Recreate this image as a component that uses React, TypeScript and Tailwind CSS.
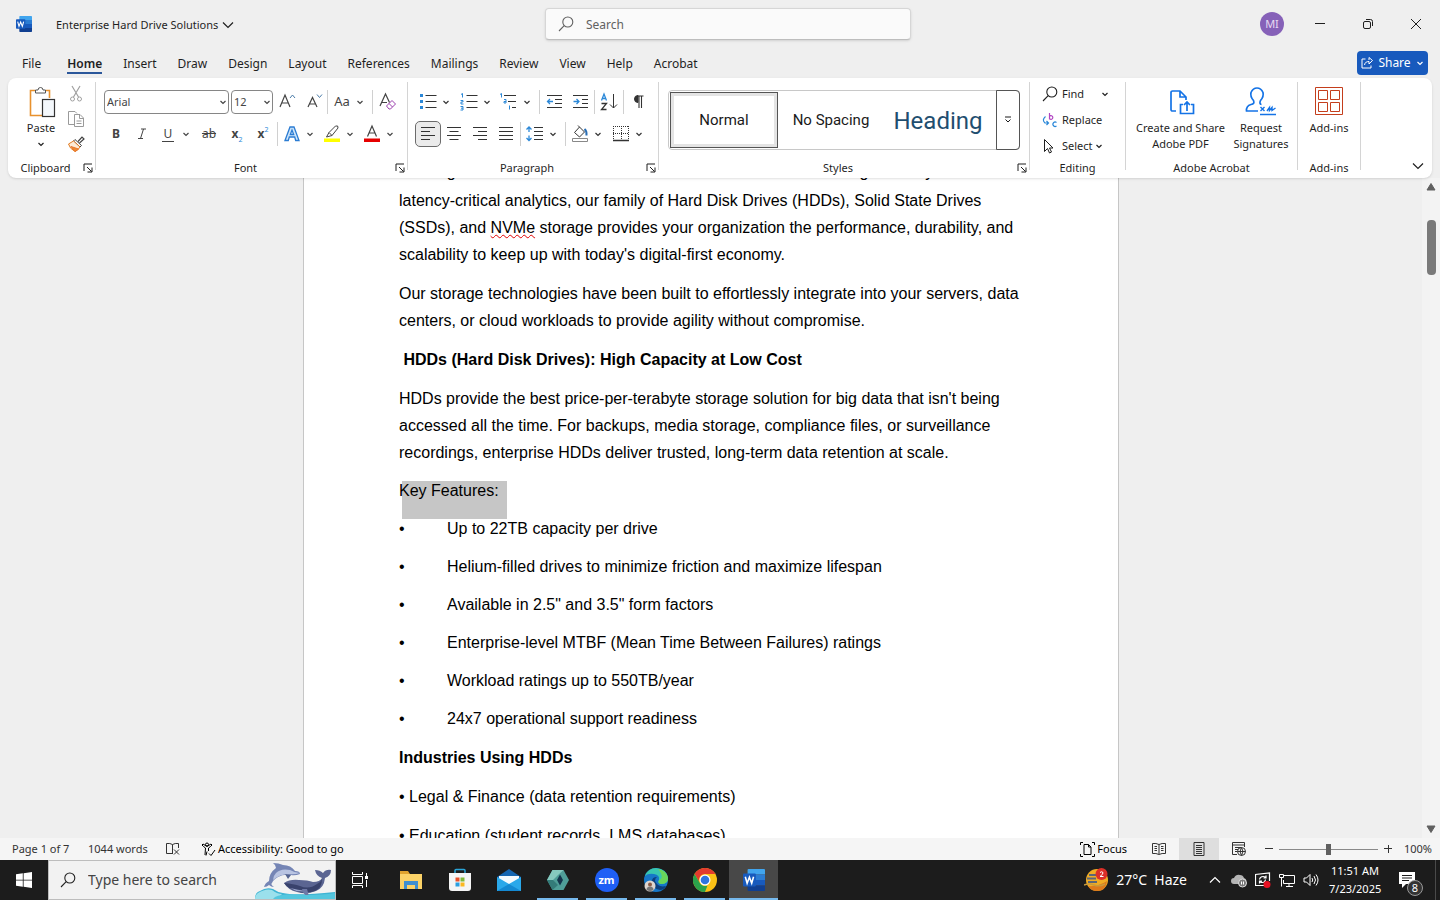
import type { ReactNode } from "react";
import { clsx } from "clsx";

const tabs = [
  "Insert",
  "Draw",
  "Design",
  "Layout",
  "References",
  "Mailings",
  "Review",
  "View",
  "Help",
  "Acrobat",
];

const features = [
  "Up to 22TB capacity per drive",
  "Helium-filled drives to minimize friction and maximize lifespan",
  "Available in 2.5\" and 3.5\" form factors",
  "Enterprise-level MTBF (Mean Time Between Failures) ratings",
  "Workload ratings up to 550TB/year",
  "24x7 operational support readiness",
];

function Svg({
  w = 20,
  h = 20,
  className,
  children,
}: {
  w?: number;
  h?: number;
  className?: string;
  children: ReactNode;
}) {
  return (
    <svg
      width={w}
      height={h}
      viewBox={`0 0 ${w} ${h}`}
      fill="none"
      stroke="currentColor"
      className={clsx("shrink-0", className)}
      aria-hidden="true"
    >
      {children}
    </svg>
  );
}

function Chevron({ className }: { className?: string }) {
  return (
    <Svg w={8} h={8} className={className}>
      <path d="M1.500 3 4 5.500 6.500 3" strokeWidth="1.200" />
    </Svg>
  );
}

function BigChevron({ up }: { up?: boolean }) {
  return (
    <Svg w={12} h={8}>
      <path d={up ? "M1 6.500 6 1.500 11 6.500" : "M1 1.500 6 6.500 11 1.500"} strokeWidth="1.200" />
    </Svg>
  );
}

function Tool({
  label,
  active,
  className,
  children,
}: {
  label: string;
  active?: boolean;
  className?: string;
  children: ReactNode;
}) {
  return (
    <button
      type="button"
      aria-label={label}
      className={clsx(
        "flex h-6 w-6 shrink-0 items-center justify-center rounded",
        active && "bg-[#ebebeb] outline outline-[#6b6b6b]",
        className,
      )}
    >
      {children}
    </button>
  );
}

function Split({
  label,
  className,
  children,
}: {
  label: string;
  className?: string;
  children: ReactNode;
}) {
  return (
    <div className={clsx("flex shrink-0 items-center gap-0.5", className)}>
      <Tool label={label}>{children}</Tool>
      <button type="button" aria-label={`${label} options`}>
        <Chevron />
      </button>
    </div>
  );
}

function Line({ className }: { className?: string }) {
  return <div className={clsx("h-6 w-px shrink-0 bg-[#d0d0d0]", className)} />;
}

function Group({
  label,
  launcher,
  className,
  children,
}: {
  label: string;
  launcher?: boolean;
  className?: string;
  children: ReactNode;
}) {
  return (
    <>
      <section
        aria-label={label}
        className={clsx("flex shrink-0 flex-col justify-between", className)}
      >
        {children}
        <div className="flex h-5 items-center">
          <span className="flex-1 text-center text-[11px]">{label}</span>
          {launcher && (
            <button type="button" aria-label={`${label} settings`} className="mr-0.5">
              <Svg w={10} h={10}>
                <path d="M1 8V1h8M4 4l4.500 4.500M9 4.500V9H4.500" />
              </Svg>
            </button>
          )}
        </div>
      </section>
      <div className="mt-1 mb-2 w-px shrink-0 bg-[#d4d4d4]" />
    </>
  );
}

function Magnifier() {
  return (
    <Svg w={16} h={16}>
      <circle cx="9.800" cy="6" r="5" strokeWidth="1.100" />
      <path d="M6.200 9.600 1 15" strokeWidth="1.100" />
    </Svg>
  );
}

function WordLogo({ size }: { size: number }) {
  return (
    <svg width={size} height={size} viewBox="0 0 24 24" aria-hidden="true">
      <path d="M6 0h17a1 1 0 0 1 1 1v5H5V1a1 1 0 0 1 1-1z" fill="#41a5ee" />
      <path d="M5 6h19v6H5z" fill="#2b7cd3" />
      <path d="M5 12h19v6H5z" fill="#185abd" />
      <path d="M5 18h19v5a1 1 0 0 1-1 1H6a1 1 0 0 1-1-1z" fill="#103f91" />
      <rect x="0" y="5" width="14" height="14" rx="1" fill="#185abd" />
      <path
        d="M2.500 8.500l2 7L7 9l2.500 6.500 2-7"
        fill="none"
        stroke="#fff"
        strokeWidth="1.700"
      />
    </svg>
  );
}

function TitleBar() {
  return (
    <header className="flex h-12 shrink-0 items-center">
      <div className="flex flex-1 items-center pl-4">
        <WordLogo size={16} />
        <button type="button" className="ml-6 flex items-center gap-1 pt-0.5 text-[11px]">
          Enterprise Hard Drive Solutions
          <BigChevron />
        </button>
      </div>
      <label className="flex h-8 w-[366px] items-center gap-3 rounded border border-[#d6d6d6] border-b-[#bdbdbd] bg-[#fafafa] px-3 text-[#616161] shadow-sm">
        <Magnifier />
        <input
          type="text"
          aria-label="Search"
          placeholder="Search"
          className="w-full bg-transparent pt-0.5 text-xs outline-none placeholder:text-[#616161]"
        />
      </label>
      <div className="flex flex-1 items-center justify-end">
        <button type="button" className="flex w-12 justify-center" aria-label="Account">
          <span className="flex h-6 w-6 items-center justify-center rounded-full bg-[#8661b8] text-[11px] text-[#e6daf2]">
            MI
          </span>
        </button>
        <button type="button" className="flex w-12 justify-center" aria-label="Minimize">
          <Svg w={12} h={12}>
            <path d="M1 5.500h10" />
          </Svg>
        </button>
        <button type="button" className="flex w-12 justify-center" aria-label="Restore">
          <Svg w={12} h={12}>
            <rect x="1.500" y="3.500" width="7" height="7" rx="1.500" />
            <path d="M4 1.500h4.500a2 2 0 0 1 2 2V8" />
          </Svg>
        </button>
        <button type="button" className="flex w-12 justify-center" aria-label="Close">
          <Svg w={12} h={12}>
            <path d="M1 1l10 10M11 1 1 11" />
          </Svg>
        </button>
      </div>
    </header>
  );
}

function TabBar() {
  return (
    <nav className="flex h-[30px] shrink-0 items-center justify-between pr-3 pl-[22px] text-xs">
      <div className="flex h-full items-center gap-[21px] pt-0.5">
        <button type="button" className="mr-[5px]">
          File
        </button>
        <button type="button" className="relative font-semibold">
          Home
          <span className="absolute inset-x-0 -bottom-0.5 h-0.5 bg-[#2b579a]" />
        </button>
        {tabs.map((tab) => (
          <button key={tab} type="button">
            {tab}
          </button>
        ))}
      </div>
      <button
        type="button"
        className="flex h-6 w-[71px] items-center justify-between rounded bg-[#185abd] px-1 text-white"
      >
        <Svg w={12} h={12}>
          <path d="M4.500 2H1v9h9V8.500M3.500 8C4 5 6 4.500 8 4.500V7l3.500-3.500L8 .5V3" />
        </Svg>
        Share
        <Chevron />
      </button>
    </nav>
  );
}

function ClipboardGroup() {
  return (
    <Group label="Clipboard" launcher className="w-[87px]">
      <div className="flex pt-1 pl-3">
        <button
          type="button"
          className="flex w-[42px] flex-col items-center pt-1 text-[11px] leading-4"
        >
          <Svg w={30} h={32} className="mb-0.5">
            <path d="M9 4.500H4.500v25H17M20 4.500h3.500V12" stroke="#e8912d" strokeWidth="1.600" />
            <path
              d="M9.500 7v-3h2.500a2.500 2.500 0 0 1 5 0h2.500v3z"
              stroke="#555"
              fill="#fff"
            />
            <rect x="16.500" y="13.500" width="12" height="17" stroke="#333" fill="#f4f8fc" strokeWidth="1.200" />
          </Svg>
          Paste
          <Chevron className="mt-1" />
        </button>
        <div className="flex flex-col gap-px pl-0.5">
          <Tool label="Cut">
            <Svg w={16} h={18} className="text-[#a0a0a0]">
              <path d="M4 1l6.500 11M12 1 5.500 12" strokeWidth="1.200" />
              <circle cx="4.500" cy="14" r="2" />
              <circle cx="11.500" cy="14" r="2" />
            </Svg>
          </Tool>
          <Tool label="Copy">
            <Svg w={18} h={18} className="text-[#9a9a9a]">
              <path d="M7 14.500H1.500v-13H8l2 2" />
              <path d="M7.500 4.500h5.500l3.500 3.500v8.500h-9zM12.500 4.500V8.500h4M9.500 11h5M9.500 13.500h5" />
            </Svg>
          </Tool>
          <Tool label="Format Painter">
            <Svg w={18} h={18}>
              <path d="M11 6.500 15 2l2 2-4.500 4" stroke="#444" strokeWidth="1.200" />
              <path d="M8 4.500l6.500 6-1.500 1.500L6.500 6z" stroke="#444" fill="#fff" />
              <path d="M6.500 6 1.500 9q1 4.500 6.500 7.500 3-1 5-4.500z" stroke="#e07a20" fill="#fdebd6" />
              <path d="M4 11.500l7.500 2.500-3.500 2.500z" stroke="#e8762d" fill="#f08c30" />
            </Svg>
          </Tool>
        </div>
      </div>
    </Group>
  );
}

function Picker({
  label,
  value,
  className,
}: {
  label: string;
  value: string;
  className?: string;
}) {
  return (
    <div className={clsx("relative shrink-0", className)}>
      <select
        aria-label={label}
        className="block h-6 w-full appearance-none rounded border border-[#868686] bg-white pl-0.5 text-[11px]"
      >
        <option>{value}</option>
      </select>
      <Chevron className="pointer-events-none absolute top-2 right-0.5" />
    </div>
  );
}

function FontGroup() {
  return (
    <Group label="Font" launcher className="w-[311px]">
      <div className="flex flex-col gap-2 pt-3 pl-2 text-[#444]">
        <div className="flex items-center gap-0.5">
          <Picker label="Font" value="Arial" className="w-[125px]" />
          <Picker label="Font Size" value="12" className="w-[42px]" />
          <Tool label="Increase Font Size">
            <Svg>
              <path d="M3 15 8 3l5 12M4.500 11h7" strokeWidth="1.200" />
              <path d="M13 6l2.500-3L18 6" stroke="#4a7ba8" />
            </Svg>
          </Tool>
          <Tool label="Decrease Font Size">
            <Svg>
              <path d="M5 15 9.500 5.500 14 15M6.500 12h6" strokeWidth="1.200" />
              <path d="M14 2.500l2.500 3 2.500-3" stroke="#4a7ba8" />
            </Svg>
          </Tool>
          <Line />
          <Split label="Change Case">
            <span className="text-[13px]">Aa</span>
          </Split>
          <Line className="ml-1.5" />
          <Tool label="Clear All Formatting">
            <Svg>
              <path d="M3 14 8.500 2 12.500 10.500M5 10.500h5" stroke="#444" strokeWidth="1.200" />
              <path d="M9.500 14 15 8.500l3.500 3.500-5 5H12zM12 11.500l3.500 3.500" stroke="#9b3fae" />
            </Svg>
          </Tool>
        </div>
        <div className="flex items-center gap-0.5">
          <Tool label="Bold" className="text-xs font-bold">
            B
          </Tool>
          <Tool label="Italic">
            <Svg w={10} h={12}>
              <path d="M4 1h5M1 10.500h5M6.500 1l-3 9.500" />
            </Svg>
          </Tool>
          <Split label="Underline">
            <span className="border-b border-[#444] px-0.5 text-xs leading-[14px]">U</span>
          </Split>
          <Tool label="Strikethrough" className="ml-[5px] text-xs line-through">
            ab
          </Tool>
          <Tool label="Subscript" className="ml-0.5 text-xs font-bold">
            x
            <span className="mt-3 text-[7px] font-normal text-[#2b88d8]">2</span>
          </Tool>
          <Tool label="Superscript" className="text-xs font-bold">
            x
            <span className="-mt-2 text-[7px] font-normal text-[#2b88d8]">2</span>
          </Tool>
          <Line />
          <Split label="Text Effects">
            <Svg>
              <path
                d="M3 16.500 8 3h4l5 13.500h-3.300L12.700 13H7.300l-1 3.500zM8.300 10.500h3.400L10 6z"
                stroke="#2b7cd3"
                fill="#cfe6fa"
                strokeWidth="1.300"
              />
            </Svg>
          </Split>
          <Split label="Text Highlight Color" className="ml-1">
            <Svg>
              <path d="M2 14.500h16v3.500H2z" fill="#ffff00" stroke="none" />
              <path d="M7 8.500 13.500 2q3-1 2.500 2L10 11.500 4.500 13zM7 8.500l3 3" stroke="#444" />
            </Svg>
          </Split>
          <Split label="Font Color" className="ml-1">
            <Svg>
              <path d="M2 14.500h16v3.500H2z" fill="#e60000" stroke="none" />
              <path d="M5.500 12.500 10 2l4.500 10.500M7 9h6" stroke="#444" strokeWidth="1.200" />
            </Svg>
          </Split>
        </div>
      </div>
    </Group>
  );
}

function ParagraphGroup() {
  return (
    <Group label="Paragraph" launcher className="w-[250px]">
      <div className="flex flex-col gap-2 pt-3 pl-2 text-[#333]">
        <div className="flex items-center gap-0.5">
          <Split label="Bullets">
            <Svg>
              <path d="M7.500 3.500h11M7.500 9.500h11M7.500 15.500h11" />
              <path d="M2 3.500h3M2 9.500h3M2 15.500h3" stroke="#2b88d8" strokeWidth="3" />
            </Svg>
          </Split>
          <Split label="Numbering" className="ml-[5px]">
            <Svg>
              <path d="M7.500 3.500h11M7.500 9.500h11M7.500 15.500h11" />
              <path
                d="M2 2.500 3.500 1.500v4M1.500 8.500h2.500v1.500H2v2h2.500M1.500 14.500H4v3.500H1.500M2 16.200h2"
                stroke="#2b88d8"
              />
            </Svg>
          </Split>
          <Split label="Multilevel List" className="ml-1">
            <Svg>
              <path d="M5 3.500h12M9 9.500h8M13 15.500h4" />
              <path d="M1 2.500 2.500 1.500v4M5 7.500h2v3.500H5V9.500h2M10.500 13.500v4" stroke="#2b88d8" />
            </Svg>
          </Split>
          <Line className="ml-1.5" />
          <Tool label="Decrease Indent">
            <Svg>
              <path d="M3 3.500h15M11 7.500h7M11 11.500h7M3 15.500h15" />
              <path d="M9 9.500H3.500M6 7 3.500 9.500 6 12" stroke="#2b88d8" strokeWidth="1.300" />
            </Svg>
          </Tool>
          <Tool label="Increase Indent">
            <Svg>
              <path d="M3 3.500h15M12 7.500h6M12 11.500h6M3 15.500h15" />
              <path d="M3.500 9.500H9M6.500 7 9 9.500 6.500 12" stroke="#2b88d8" strokeWidth="1.300" />
            </Svg>
          </Tool>
          <Line />
          <Tool label="Sort">
            <Svg>
              <path d="M2.500 8.500 5 2l2.500 6.500M3.500 6.500h3" stroke="#2b88d8" strokeWidth="1.300" />
              <path d="M2.500 11.500h5l-5 6h5" strokeWidth="1.300" />
              <path d="M14.500 2v14M11 12.500l3.500 3.500L18 12.500" />
            </Svg>
          </Tool>
          <Line />
          <Tool label="Show Paragraph Marks">
            <Svg>
              <path d="M10 10.500a3.500 3.500 0 0 1 0-7z" fill="currentColor" />
              <path d="M9.500 4h6M11 4v12M13.500 4v12" strokeWidth="1.100" />
            </Svg>
          </Tool>
        </div>
        <div className="flex items-center gap-0.5">
          <Tool label="Align Left" active>
            <Svg>
              <path d="M3 3.500h14M3 7.500h9M3 11.500h14M3 15.500h9" />
            </Svg>
          </Tool>
          <Tool label="Center">
            <Svg>
              <path d="M3 3.500h14M5.500 7.500h9M3 11.500h14M5.500 15.500h9" />
            </Svg>
          </Tool>
          <Tool label="Align Right">
            <Svg>
              <path d="M3 3.500h14M8 7.500h9M3 11.500h14M8 15.500h9" />
            </Svg>
          </Tool>
          <Tool label="Justify">
            <Svg>
              <path d="M3 3.500h14M3 7.500h14M3 11.500h14M3 15.500h14" />
            </Svg>
          </Tool>
          <Line />
          <Split label="Line Spacing">
            <Svg>
              <path d="M9 3.500h9M9 7.500h9M9 11.500h9M9 15.500h9" />
              <path d="M4 3v5M4 11.500v5M1.500 5.500 4 3l2.500 2.500M1.500 14 4 16.500 6.500 14" stroke="#2b88d8" strokeWidth="1.300" />
            </Svg>
          </Split>
          <Line className="ml-1.5" />
          <Split label="Shading">
            <Svg>
              <path d="M4.500 8.500 9.500 3l5 5-5 5zM9.500 3 8 1.500" />
              <path d="M14.500 5q2.500 2 2 6.500" stroke="#2b6fb5" strokeWidth="2" />
              <path d="M2.500 14.500h15v3h-15z" stroke="#888" />
            </Svg>
          </Split>
          <Split label="Borders" className="ml-[5px]">
            <Svg>
              <path d="M2.500 2v14M17.500 2v14M10.500 2v14M2 2.500h16M2 9.500h16" strokeDasharray="1 1" />
              <path d="M2 16.500h16" strokeWidth="1.500" />
            </Svg>
          </Split>
        </div>
      </div>
    </Group>
  );
}

function StylesGroup() {
  return (
    <Group label="Styles" launcher className="w-[370px]">
      <div className="mx-[9px] mt-3 flex h-[60px] rounded border border-[#c8c8c8] font-['Roboto'] text-[15px] text-[#1a1a1a]">
        <button
          type="button"
          className="my-px ml-px w-[108px] border border-[#555] ring-3 ring-[#e4e4e4] ring-inset"
        >
          Normal
        </button>
        <button type="button" className="w-[106px] whitespace-nowrap">
          No Spacing
        </button>
        <button
          type="button"
          className="flex-1 pt-0.5 pr-1 text-2xl whitespace-nowrap text-[#1f4e6f]"
        >
          Heading
        </button>
        <button
          type="button"
          aria-label="More styles"
          className="-m-px ml-0 flex w-6 items-center justify-center rounded-r border border-[#555]"
        >
          <Svg w={8} h={10}>
            <path d="M1 2h6M1.500 4.500 4 7l2.500-2.500" />
          </Svg>
        </button>
      </div>
    </Group>
  );
}

function EditingGroup() {
  return (
    <Group label="Editing" className="w-[95px]">
      <div className="flex flex-col gap-1.5 pt-1.5 pl-3 text-[11px]">
        <div className="flex h-5 items-center">
          <button type="button" className="flex flex-1 items-center gap-1">
            <Magnifier />
            Find
          </button>
          <Chevron className="mr-4" />
        </div>
        <button type="button" className="flex h-5 items-center gap-1">
          <Svg w={16} h={16}>
            <path d="M7.500 1v6.500M7.500 4.500a1.800 1.800 0 1 1 0 2" stroke="#b146c2" strokeWidth="1.200" />
            <path d="M3.500 4.500Q-.5 8 3 11h3M4.500 9 6.500 11l-2 2" stroke="#2b88d8" strokeWidth="1.200" />
            <path d="M14.500 10.500a2.200 2.200 0 1 0 0 3.500" stroke="#2b88d8" strokeWidth="1.200" />
          </Svg>
          Replace
        </button>
        <button type="button" className="flex h-5 items-center gap-1">
          <Svg w={16} h={16}>
            <path d="M2.500 1.500v12l3-3 2 4.500 2-1-2-4H11z" />
          </Svg>
          <span className="flex items-center">
            Select
            <Chevron className="ml-0.5" />
          </span>
        </button>
      </div>
    </Group>
  );
}

function AcrobatGroup() {
  return (
    <Group label="Adobe Acrobat" className="w-[171px]">
      <div className="flex gap-1 pt-2 pl-2 text-[11px] leading-4">
        <button type="button" className="flex w-[93px] flex-col items-center">
          <Svg w={28} h={32} className="mb-0.5 text-[#1473e6]">
            <path
              d="M9 25H5.500a1.500 1.500 0 0 1-1.500-1.500v-17A1.500 1.500 0 0 1 5.500 5H13l6 6v3M13 5v6h6M16 18.500h-2.500v9h13v-9H24M20 25v-9M17 19l3-3 3 3"
              strokeWidth="1.700"
            />
          </Svg>
          <span className="whitespace-nowrap">
            Create and Share
            <br />
            Adobe PDF
          </span>
        </button>
        <button type="button" className="flex w-[60px] flex-col items-center">
          <Svg w={32} h={32} className="mb-0.5 text-[#1473e6]">
            <path
              d="M13 25H1.500Q1 20 6 18.500 10 18 8.500 14.500 5 10.500 6 6.500 8 2 12 2t6 4.500q1 4-2.500 8-1.500 3.500 1 4"
              strokeWidth="1.700"
            />
            <path d="M15.500 21l4 4M19.500 21l-4 4M22 25l2.500-3.500v3l2.500-3v3l3.500-2.500M15 28.500h16" strokeWidth="1.400" />
          </Svg>
          <span>
            Request
            <br />
            Signatures
          </span>
        </button>
      </div>
    </Group>
  );
}

function Ribbon() {
  return (
    <div className="relative z-10 mx-2 flex h-[100px] shrink-0 overflow-hidden rounded-lg bg-white shadow">
      <ClipboardGroup />
      <FontGroup />
      <ParagraphGroup />
      <StylesGroup />
      <EditingGroup />
      <AcrobatGroup />
      <Group label="Add-ins" className="w-[62px]">
        <button type="button" className="flex flex-col items-center pt-2 text-[11px] leading-4">
          <Svg w={28} h={32} className="mb-0.5 text-[#c43e1c]">
            <path d="M.5 1.500h27v27H.5zM3.500 4.500h9v9h-9zM15.500 4.500h9v9h-9zM3.500 16.500h9v9h-9zM15.500 16.500h9v9h-9z" />
          </Svg>
          Add-ins
        </button>
      </Group>
      <div className="flex flex-1 items-end justify-end p-2">
        <button type="button" aria-label="Collapse ribbon">
          <BigChevron />
        </button>
      </div>
    </div>
  );
}

function Document() {
  return (
    <main className="flex min-h-0 flex-1">
      <div className="flex min-w-0 flex-1 justify-center overflow-hidden">
        <article className="w-[816px] border-x border-[#c6c6c6] bg-white px-[95px] font-['Liberation_Sans',Arial,sans-serif] text-base leading-[27px] text-black">
          {/* scrolled: only the descenders of this line show under the ribbon */}
          <p className="-mt-5 mb-0.5">
            Offering solutions to meet the needs of modern data centers to high-density and
          </p>
          <p className="mb-3">
            latency-critical analytics, our family of Hard Disk Drives (HDDs), Solid State Drives
            <br />
            (SSDs), and{" "}
            <span className="underline decoration-[#e00000] decoration-wavy decoration-1 underline-offset-1">
              NVMe
            </span>{" "}
            storage provides your organization the performance, durability, and
            <br />
            scalability to keep up with today's digital-first economy.
          </p>
          <p className="mb-3">
            Our storage technologies have been built to effortlessly integrate into your servers,
            data
            <br />
            centers, or cloud workloads to provide agility without compromise.
          </p>
          <h2 className="mb-3 font-bold">&nbsp;HDDs (Hard Disk Drives): High Capacity at Low Cost</h2>
          <p className="mb-[11px]">
            HDDs provide the best price-per-terabyte storage solution for big data that isn't being
            <br />
            accessed all the time. For backups, media storage, compliance files, or surveillance
            <br />
            recordings, enterprise HDDs deliver trusted, long-term data retention at scale.
          </p>
          <p className="relative mb-[11px]">
            <span className="absolute top-1 left-[3px] h-[38px] w-[105px] bg-[#c6c6c6]" />
            <span className="relative">Key Features:</span>
          </p>
          <ul className="mb-3 flex flex-col gap-[11px]">
            {features.map((feature) => (
              <li key={feature} className="flex">
                <span className="w-12">•</span>
                {feature}
              </li>
            ))}
          </ul>
          <h2 className="mb-3 font-bold">Industries Using HDDs</h2>
          <p className="mb-3">• Legal &amp; Finance (data retention requirements)</p>
          <p>• Education (student records, LMS databases)</p>
        </article>
      </div>
      <div className="flex w-[18px] shrink-0 flex-col items-center justify-between bg-[#f3f3f3] py-1 text-[#606060]">
        <Svg w={10} h={10}>
          <path d="M5 1.500 9 8H1z" fill="currentColor" />
        </Svg>
        <div className="mt-7 mb-auto h-[55px] w-[9px] rounded bg-[#7a7a7a]" />
        <Svg w={10} h={10}>
          <path d="M5 8.500 9 2H1z" fill="currentColor" />
        </Svg>
      </div>
    </main>
  );
}

function StatusBar() {
  return (
    <div className="flex h-[22px] shrink-0 items-center justify-between bg-[#f5f5f5] pr-2 pl-3 text-[11px] text-[#333]">
      <div className="flex items-center">
        <span className="w-[76px]">Page 1 of 7</span>
        <span className="w-[77px]">1044 words</span>
        <button type="button" aria-label="Proofing" className="w-9">
          <Svg w={16} h={14}>
            <path d="M7.500 12V2.500Q5 1 1.500 1.500v10H7M7.500 2.500Q10 1 13.500 1.500V6M9 7.500l5 5M14 7.500l-5 5" />
          </Svg>
        </button>
        <button type="button" className="flex items-center gap-0.5 text-black">
          <Svg w={15} h={15}>
            <circle cx="6" cy="2.500" r="1.500" />
            <path d="M1 3l1.500 1.500L4.500 6 4 13M11 3 9.500 4.500 7.500 6v3M1 3 2 2l4 2.500L10 2l1 1M6 9.500l-1 4M8 11.500l2 2L14 8" />
          </Svg>
          Accessibility: Good to go
        </button>
      </div>
      <div className="flex h-full items-center">
        <button type="button" className="mr-3 flex items-center gap-0.5 text-black">
          <Svg w={15} h={15}>
            <path d="M3 .5H.5V3M12 .5h2.500V3M.5 12v2.500H3M14.500 12v2.500H12M4 2.500h4.500L11 5v7.500H4zM8.500 2.500V5H11" />
          </Svg>
          Focus
        </button>
        <button type="button" aria-label="Read Mode" className="flex h-full w-10 items-center justify-center">
          <Svg w={14} h={14}>
            <path d="M7 12V2.500Q4 1 .5 1.500v10Q4 11 7 12.500 10 11 13.500 11.500v-10Q10 1 7 2.500M2.500 4.500H5M2.500 6.500H5M2.500 8.500H5M9 4.500h2.500M9 6.500h2.500M9 8.500h2.500" />
          </Svg>
        </button>
        <button type="button" aria-label="Print Layout" className="flex h-full w-10 items-center justify-center bg-[#dedede]">
          <Svg w={12} h={14}>
            <path d="M1 .5h10v13H1zM3 3.500h6M3 5.500h6M3 7.500h6M3 9.500h6M3 11.500h6" />
          </Svg>
        </button>
        <button type="button" aria-label="Web Layout" className="flex h-full w-10 items-center justify-center">
          <Svg w={14} h={14}>
            <path d="M5 12.500H.5v-12h12V5M.5 3h12M3 5.500h6M3 7.500h3M3 9.500h2" />
            <circle cx="9.500" cy="9.500" r="4" />
            <path d="M5.500 9.500h8M9.500 5.500q-3 4 0 8M9.500 5.500q3 4 0 8" />
          </Svg>
        </button>
        <button type="button" aria-label="Zoom Out" className="flex w-5 justify-center">
          <Svg w={8} h={8}>
            <path d="M0 3.500h8" />
          </Svg>
        </button>
        <input
          type="range"
          aria-label="Zoom"
          defaultValue={50}
          className="h-3 w-[99px] appearance-none bg-transparent [&::-webkit-slider-runnable-track]:h-px [&::-webkit-slider-runnable-track]:bg-[#8a8a8a] [&::-webkit-slider-thumb]:-mt-[5px] [&::-webkit-slider-thumb]:h-[11px] [&::-webkit-slider-thumb]:w-[5px] [&::-webkit-slider-thumb]:appearance-none [&::-webkit-slider-thumb]:bg-[#606060]"
        />
        <button type="button" aria-label="Zoom In" className="flex w-5 justify-center">
          <Svg w={8} h={8}>
            <path d="M0 3.500h8M4.500 0v8" />
          </Svg>
        </button>
        <span className="w-[34px] text-right">100%</span>
      </div>
    </div>
  );
}

function Dolphins() {
  return (
    <Svg w={80} h={38} className="self-end">
      <g stroke="none">
        <path d="M0 38q0-7 5-8 6-4 13-2 4 3 10 4 12 3 52-1v7z" fill="#3fb4d4" />
        <path d="M3 32q8-5 14-3 5 4 10 4l-5 5H0q0-4 3-6z" fill="#9be0ec" />
        <path
          d="M17 22q-2 1 2 4-3 0-5-2-2 2-5 2 1-4 5-6 0-8 7-13 0-3-3-5 6 0 10 2 8 0 12 6 5 0 5 3-5 2-9 1-8-1-13 2-5 3-6 6z"
          fill="#7585b5"
        />
        <path d="M21 12q5-5 14-3 5 3 10 3-6 2-11 1-9 0-16 6 0-4 3-7z" fill="#b9c4e2" />
        <path d="M30 13l3 5 3-4z" fill="#54638f" />
        <path
          d="M29 22q6-4 15-3 9 0 14 2 7 0 9-4-6-2-7-8 5 0 8 3 3-4 8-3 0 6-6 8-1 10-9 13-10 4-19 1-9-2-13-9z"
          fill="#5b6592"
        />
        <path d="M29 22q10 1 16 3 9 4 17-2 4-2 5-5 0 9-7 12-10 3-18 0-9-2-13-8z" fill="#39426c" />
        <path d="M35 27q8 2 16 3-8 2-16-3z" fill="#9aa5cc" />
        <path d="M47 28q1 6 7 8-1-5-2-8z" fill="#6e78a6" />
        <path d="M20 36q8-4 30-2 18 0 30-2v6H18z" fill="#54c6de" />
      </g>
    </Svg>
  );
}

function AppButton({
  label,
  open,
  active,
  children,
}: {
  label: string;
  open?: boolean;
  active?: boolean;
  children: ReactNode;
}) {
  return (
    <button
      type="button"
      aria-label={label}
      className={clsx(
        "relative flex h-10 w-[49px] shrink-0 items-center justify-center",
        active && "bg-[#484848]",
      )}
    >
      {children}
      {open && (
        <span
          className={clsx(
            "absolute bottom-0 h-0.5 bg-[#76b9ed]",
            active ? "inset-x-0" : "inset-x-1",
          )}
        />
      )}
    </button>
  );
}

function Taskbar() {
  return (
    <footer className="flex h-10 shrink-0 items-center bg-[#1c1c1c] text-white">
      <button type="button" aria-label="Start" className="flex w-12 justify-center">
        <Svg w={16} h={16}>
          <path
            d="M0 2.300 6.800 1.300v6.400H0zM7.600 1.200 16 0v7.700H7.600zM0 8.500h6.800v6.300L0 13.800zM7.600 8.500H16V16l-8.400-1.200z"
            fill="#fff"
            stroke="none"
          />
        </Svg>
      </button>
      <label className="flex h-10 w-[288px] items-center border border-[#bdbdbd] bg-[#f2f2f2] pl-[11px] text-[#222]">
        <Magnifier />
        <input
          type="text"
          aria-label="Type here to search"
          placeholder="Type here to search"
          className="ml-3 w-0 flex-1 bg-transparent text-sm outline-none placeholder:text-[#444]"
        />
        <Dolphins />
      </label>
      <button type="button" aria-label="Task View" className="mr-0.5 flex w-12 justify-center">
        <Svg w={18} h={18}>
          <path d="M1.500 1v2.500h10V1M1.500 17v-2.500h10V17M1.500 5.500h10v7h-10zM15.500 2v3M15.500 9v7" />
          <path d="M14 5h3v3h-3z" fill="#fff" stroke="none" />
        </Svg>
      </button>
      <AppButton label="File Explorer">
        <Svg w={24} h={24}>
          <g stroke="none">
            <path d="M1 3h8l2 3h12v4H1z" fill="#e0a32e" />
            <path d="M1 6h22v15H1z" fill="#fbd267" />
            <path d="M5 13h14v8h-3v-4H8v4H5z" fill="#3f8fd0" />
          </g>
        </Svg>
      </AppButton>
      <AppButton label="Microsoft Store">
        <Svg w={24} h={24}>
          <path d="M7 7V2.500q0-1 1-1h8q1 0 1 1V7" stroke="#2aa5d8" strokeWidth="1.500" />
          <g stroke="none">
            <path d="M1 5h22v15q0 3-3 3H4q-3 0-3-3z" fill="#f5f5f5" />
            <path d="M7.500 9.500h4v4h-4z" fill="#e8502a" />
            <path d="M12.500 9.500h4v4h-4z" fill="#80b93a" />
            <path d="M7.500 14.500h4v4h-4z" fill="#2a9fe0" />
            <path d="M12.500 14.500h4v4h-4z" fill="#fbb820" />
          </g>
        </Svg>
      </AppButton>
      <AppButton label="Mail">
        <Svg w={24} h={24}>
          <g stroke="none">
            <path d="M0 9 12 1l12 8v3H0z" fill="#1565b0" />
            <path d="M2 8h20v8H2z" fill="#f4fafe" />
            <path d="M0 9l12 7 12-7v14H0z" fill="#2aa8ea" />
            <path d="M12 16l12 7H0z" fill="#1489d2" />
          </g>
        </Svg>
      </AppButton>
      <AppButton label="Hexagon app" open>
        <Svg w={24} h={24}>
          <g stroke="none">
            <path d="M6.500 2h11L23 12l-5.500 10h-11L1 12z" fill="#4f9e98" />
            <path d="M6.500 2h11L12 7 7 12l-6 0z" fill="#86c9bf" />
            <path d="M1 12h6l5 5-5.500 5z" fill="#347b79" />
            <path d="M14 6.500 17 12l-3 5.500L11 12z" fill="#15354d" />
          </g>
        </Svg>
      </AppButton>
      <AppButton label="Zoom" open>
        <span className="flex h-6 w-6 items-center justify-center rounded-full bg-[#1f5ff5] pb-0.5 text-[11px] leading-none font-bold">
          zm
        </span>
      </AppButton>
      <AppButton label="Edge" open>
        <Svg w={24} h={24}>
          <g stroke="none">
            <circle cx="12" cy="12" r="12" fill="#1677c8" />
            <path d="M1 8Q4 0 12 0q11 1 12 10 0 6-7 6-4-1-2-4 1-5-5-6Q4 5 1 8z" fill="#38c6b0" />
            <path d="M14 1q9 2 10 9 0 6-7 6-4-1-2-4 6-2-1-11z" fill="#69d65a" />
            <path d="M8 13q0 8 8 9 4 0 6-4-8 2-11-5 0-3 2-4-5 0-5 4z" fill="#0c3f7c" />
            <circle cx="6" cy="18" r="5.500" fill="#ddd5ce" />
            <circle cx="6" cy="16.500" r="2" fill="#8a5a44" />
            <path d="M2.500 22q0-3.500 3.500-3.500t3.500 3.500q-3.500 2-7 0z" fill="#777" />
          </g>
        </Svg>
      </AppButton>
      <AppButton label="Chrome" open>
        <Svg w={24} h={24}>
          <g stroke="none">
            <circle cx="12" cy="12" r="12" fill="#fbc116" />
            <path d="M1.600 6A12 12 0 0 1 22.400 6H12a6 6 0 0 0-5.200 9z" fill="#e33b2e" />
            <path d="M1.600 6 6.800 15A6 6 0 0 0 14.500 17.500L12 24A12 12 0 0 1 1.600 6z" fill="#2ba24c" />
            <circle cx="12" cy="12" r="5.500" fill="#fff" />
            <circle cx="12" cy="12" r="4.300" fill="#2f74e0" />
          </g>
        </Svg>
      </AppButton>
      <AppButton label="Word" open active>
        <WordLogo size={22} />
      </AppButton>

      <div className="flex flex-1 items-center justify-end">
        <button type="button" className="mr-4 flex items-center gap-2 text-sm whitespace-pre">
          <Svg w={24} h={24}>
            <g stroke="none">
              <circle cx="13" cy="12" r="11" fill="#f0ac24" />
              <path d="M4 18q10 1 19-5-1 10-10 10-6 0-9-5z" fill="#dd7a1c" />
            </g>
            <path d="M5 7h8M3 10.500h9M4 14h9" stroke="#5b6678" strokeWidth="1.800" />
            <path d="M0 17q5-2 10 0t11-1" stroke="#c99a3c" strokeWidth="1.500" />
            <circle cx="17.500" cy="6" r="6" fill="#dc2f28" stroke="none" />
            <path d="M16 4.500q1.500-1.500 3 0 .5 1.500-3 4h3.500" stroke="#fff" />
          </Svg>
          27°C  Haze
        </button>
        <button type="button" aria-label="Show hidden icons" className="flex w-6 justify-center">
          <BigChevron up />
        </button>
        <span className="flex w-6 justify-center">
          <Svg w={16} h={16}>
            <path d="M3 12a3 3 0 0 1 0-6q2-4 6-3 3 0 4 3 3 1 2 4l-3 2z" fill="#b5b5b5" stroke="none" />
            <circle cx="11.500" cy="11" r="4" fill="#777" stroke="#ddd" />
            <path d="M10.500 9.500v3M12.500 9.500v3" stroke="#fff" />
          </Svg>
        </span>
        <span className="flex w-6 justify-center">
          <Svg w={16} h={16}>
            <path d="M9 13.500H.5v-11L14.500 1v8" strokeWidth="1.200" />
            <path d="M4.500 7.500Q5 4.500 8 4.500q1.500 0 2.500 1M11 3.500v2.500H8.500M10.500 7.500Q10 10.500 7.500 10.500 6 10.500 5 9.500M4.500 11.500V9H7" strokeWidth="1.200" />
            <circle cx="12" cy="12.500" r="3.500" fill="#e81123" stroke="none" />
          </Svg>
        </span>
        <span className="flex w-6 justify-center">
          <Svg w={16} h={14}>
            <path d="M5 2.500h10.500v8H4.500V7M7 13.500h7M10 10.500v3M.5 1.500h4v3h-4zM2.500 4.500v9" />
          </Svg>
        </span>
        <span className="mr-1.5 flex w-6 justify-center">
          <Svg w={16} h={14}>
            <path d="M1 5h2.500L7 1.500v11L3.500 9H1zM9 5q1.500 2 0 4M11 3q3 4 0 8M13 1.500q4 5.500 0 11" />
          </Svg>
        </span>
        <button type="button" className="w-[52px] text-center text-[11px] leading-[18px] whitespace-nowrap">
          11:51 AM
          <br />
          7/23/2025
        </button>
        <button
          type="button"
          aria-label="Notifications"
          className="relative mr-2.5 ml-2 flex h-10 w-9 items-center justify-center"
        >
          <Svg w={18} h={18}>
            <path d="M1 1h16v12H8l-4 4v-4H1z" fill="#fff" stroke="none" />
            <path d="M4 4.500h10M4 7h10M4 9.500h7" stroke="#1c1c1c" />
          </Svg>
          <span className="absolute right-0.5 bottom-1 flex h-4 w-4 items-center justify-center rounded-full border border-[#999] bg-[#333] text-[11px]">
            8
          </span>
        </button>
        <span className="mr-1 h-10 w-px bg-[#4a4a4a]" />
      </div>
    </footer>
  );
}

export default function App() {
  return (
    <div className="flex h-screen flex-col overflow-hidden bg-[#efefef] font-['Noto_Sans',sans-serif] text-[#1f1f1f]">
      <TitleBar />
      <TabBar />
      <Ribbon />
      <Document />
      <StatusBar />
      <Taskbar />
    </div>
  );
}
